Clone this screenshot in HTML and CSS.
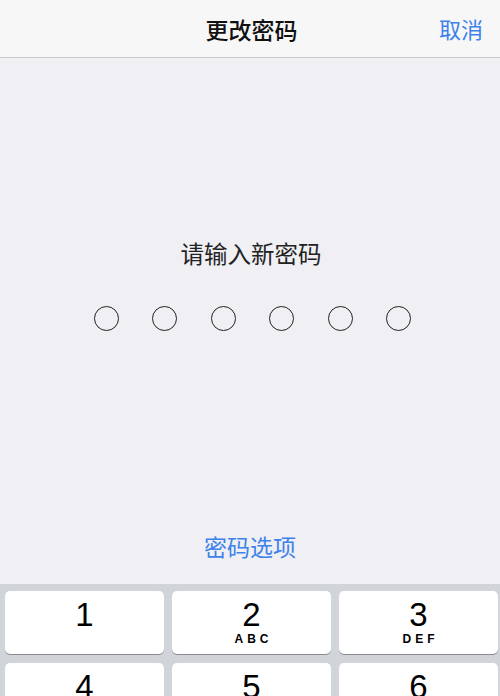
FILE: index.html
```html
<!DOCTYPE html>
<html lang="zh-CN">

<head>
    <meta charset="UTF-8">
    <title>更改密码</title>
    <link rel="stylesheet" href="styles.css">
</head>

<body>
    <div class="screen">
        <div class="nav">
            <span class="nav-title">更改密码</span>
            <span class="nav-cancel">取消</span>
        </div>
        <div class="main">
            <p class="prompt">请输入新密码</p>
            <ul class="dots">
                <li></li>
                <li></li>
                <li></li>
                <li></li>
                <li></li>
                <li></li>
            </ul>
            <p class="options">密码选项</p>
        </div>
        <div class="keypad">
            <div class="key"><span class="num">1</span></div>
            <div class="key"><span class="num">2</span><span class="abc">ABC</span></div>
            <div class="key"><span class="num">3</span><span class="abc">DEF</span></div>
            <div class="key"><span class="num">4</span><span class="abc">GHI</span></div>
            <div class="key"><span class="num">5</span><span class="abc">JKL</span></div>
            <div class="key"><span class="num">6</span><span class="abc">MNO</span></div>
        </div>
    </div>
</body>

</html>
```

FILE: styles.css
```css
* {
    padding: 0;
    margin: 0;
}

body {
    font-family: "Noto Sans CJK SC", "Liberation Sans", sans-serif;
    background-color: #efeff4;
}

.screen {
    width: 500px;
    height: 696px;
    overflow: hidden;
    display: flex;
    flex-direction: column;
}

.nav {
    position: relative;
    flex-shrink: 0;
    height: 57px;
    background-color: #f7f7f8;
    border-bottom: 1px solid #c8c8cc;
    display: flex;
    align-items: center;
    justify-content: center;
}

.nav-title {
    font-size: 23px;
    font-weight: 500;
    color: #111;
    margin-left: 3px;
}

.nav-cancel {
    position: absolute;
    right: 17px;
    top: 12px;
    font-size: 22px;
    color: #3d82ea;
}

.main {
    flex-shrink: 0;
    height: 526px;
    display: flex;
    flex-direction: column;
    align-items: center;
}

.prompt {
    margin-top: 181px;
    font-size: 23.5px;
    line-height: 28px;
    color: #222;
    margin-left: 2px;
}

.dots {
    list-style: none;
    display: flex;
    gap: 33.5px;
    margin-top: 39px;
    margin-left: 5px;
}

.dots li {
    width: 23px;
    height: 23px;
    border: 1.7px solid #222;
    border-radius: 50%;
}

.options {
    margin-top: 201px;
    font-size: 23px;
    line-height: 28px;
    color: #3d82ea;
}

.keypad {
    flex-shrink: 0;
    background-color: #d1d4d9;
    padding: 7px 2px 7px 5px;
    display: grid;
    grid-template-columns: repeat(3, 1fr);
    grid-auto-rows: 63px;
    gap: 9px 8px;
}

.key {
    background-color: #fff;
    border-radius: 5px;
    box-shadow: 0 1px 0 #8a8b8e;
    display: flex;
    flex-direction: column;
    align-items: center;
    padding-top: 7px;
    font-family: "Liberation Sans", sans-serif;
    color: #000;
}

.num {
    font-size: 33px;
    line-height: 33px;
}

.abc {
    font-size: 12px;
    font-weight: bold;
    letter-spacing: 4px;
    padding-left: 4px;
    line-height: 12px;
    margin-top: 2px;
}
```
